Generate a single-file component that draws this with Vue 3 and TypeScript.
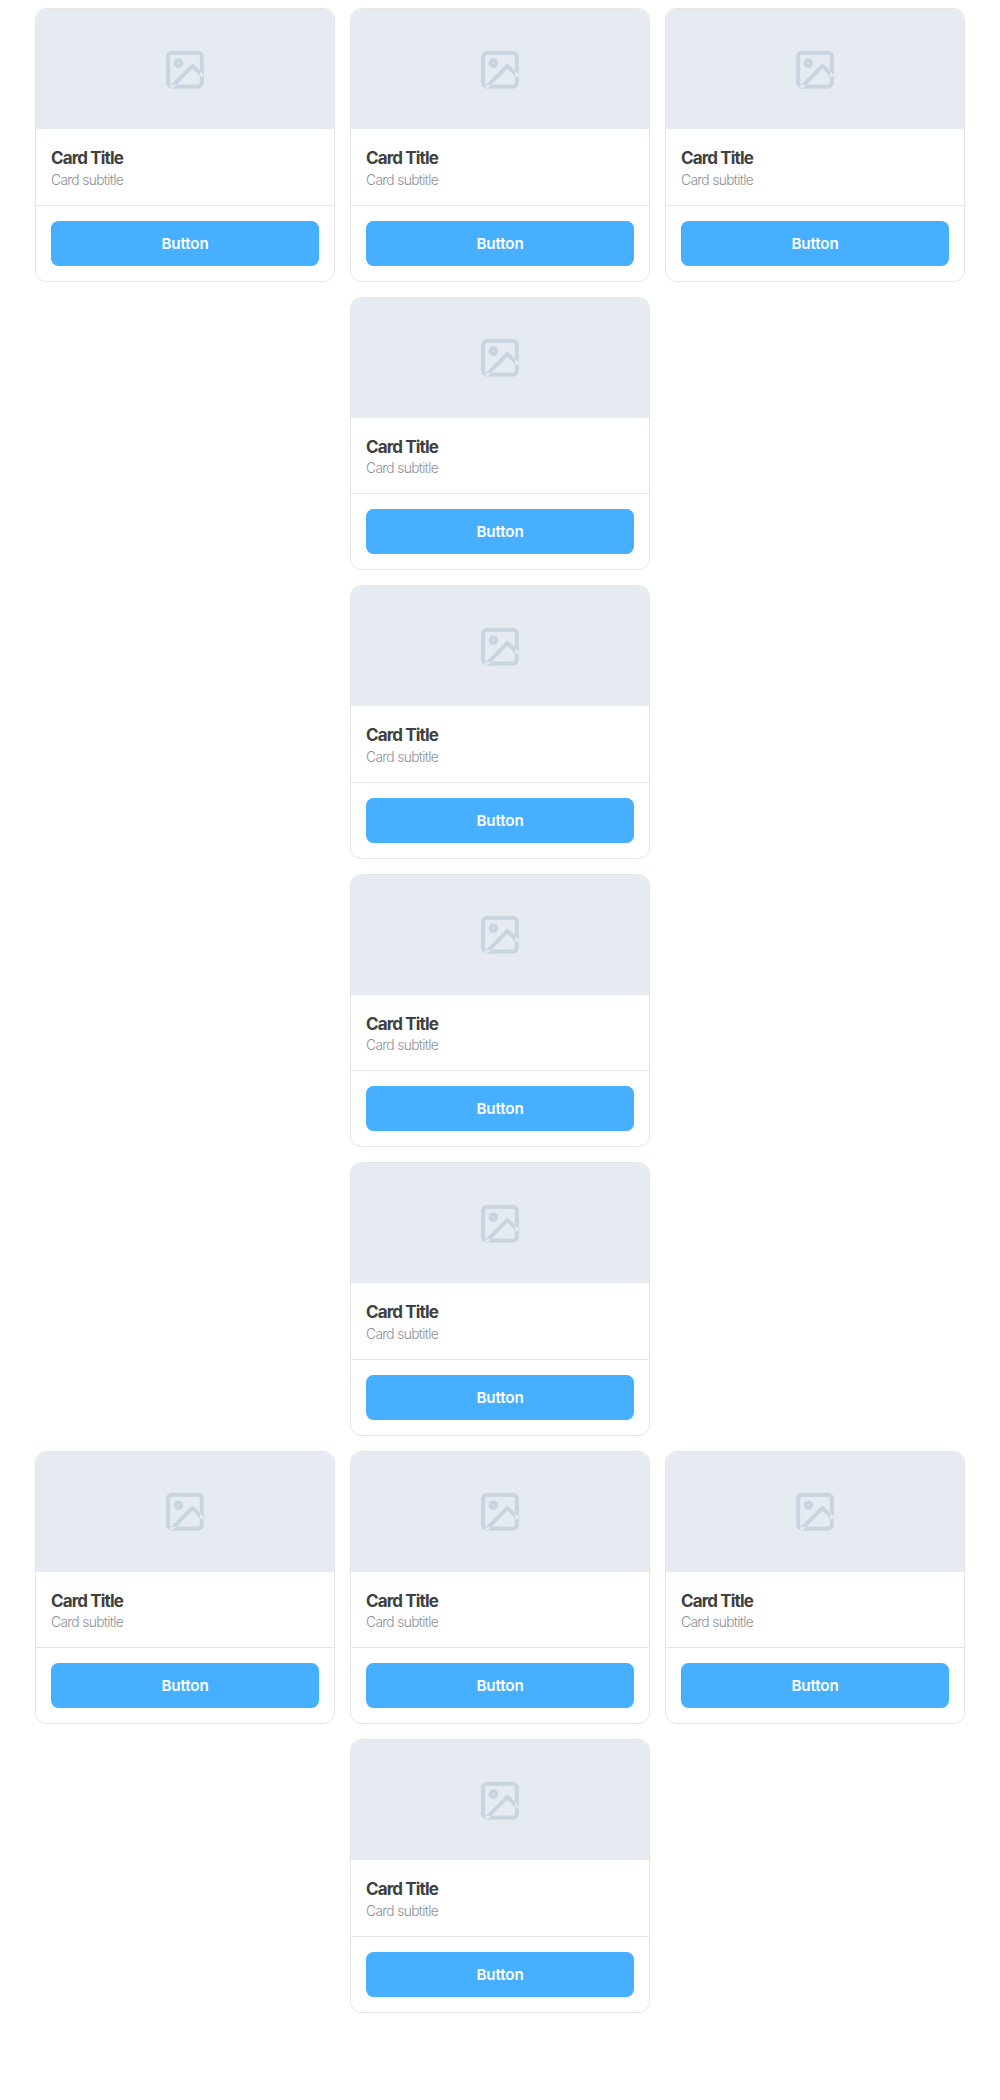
<script setup lang="ts">
interface Card {
  title: string
  subtitle: string
  action: string
}

const card = (): Card => ({ title: 'Card Title', subtitle: 'Card subtitle', action: 'Button' })
const rows: Card[][] = [3, 1, 1, 1, 1, 3, 1].map((count) => Array.from({ length: count }, card))
</script>

<template>
  <main class="page">
    <div v-for="(row, r) in rows" :key="r" class="row">
      <article v-for="(item, c) in row" :key="c" class="card">
        <div class="cover">
          <svg class="icon" viewBox="-0.25 -0.1 24 24" aria-hidden="true">
            <path
              fill-rule="evenodd"
              d="M5 2H19A3 3 0 0 1 22 5V19A3 3 0 0 1 19 22H5A3 3 0 0 1 2 19V5A3 3 0 0 1 5 2ZM5 4A1 1 0 0 0 4 5V19A1 1 0 0 0 5 20H19A1 1 0 0 0 20 19V5A1 1 0 0 0 19 4ZM8.5 6A2.5 2.5 0 1 1 8.5 11A2.5 2.5 0 1 1 8.5 6ZM8.5 8A.5 .5 0 1 0 8.5 9A.5 .5 0 1 0 8.5 8ZM21.707 14.293L16.707 9.293A1 1 0 0 0 15.293 9.293L4.293 20.293A1 1 0 0 0 5.707 21.707L16 11.414L20.293 15.707A1 1 0 0 0 21.707 14.293Z"
            />
          </svg>
        </div>
        <div class="body">
          <div class="title">{{ item.title }}</div>
          <div class="subtitle">{{ item.subtitle }}</div>
        </div>
        <div class="footer">
          <button class="button" type="button">{{ item.action }}</button>
        </div>
      </article>
    </div>
  </main>
</template>

<style>
body {
  background: #fff;
}
</style>

<style scoped>
.page {
  display: flex;
  flex-direction: column;
  gap: 15px;
  padding-top: 8px;
  font-family: Inter, sans-serif;
}
.row {
  display: flex;
  justify-content: center;
  gap: 15px;
}
.card {
  box-sizing: border-box;
  width: 300px;
  border: 1px solid #e5e5e5;
  border-radius: 11.25px;
  background: #fff;
}
.cover {
  display: flex;
  align-items: center;
  justify-content: center;
  height: 120px;
  border-radius: 11.25px 11.25px 0 0;
  background: #e6ebf2;
}
.icon {
  width: 45px;
  height: 45px;
  margin-right: 1px;
  fill: #c8d5e0;
  stroke: #c8d5e0;
  stroke-width: 0.15;
}
.body {
  box-sizing: border-box;
  height: 75.5px;
  padding: 18px 15px 0;
}
.title {
  font-size: 17px;
  font-weight: 700;
  line-height: 22px;
  letter-spacing: -0.87px;
  color: #404040;
}
.subtitle {
  margin-top: -0.2px;
  font-size: 13.8px;
  font-weight: 300;
  line-height: 22px;
  letter-spacing: -0.66px;
  color: #8e9196;
}
.footer {
  padding: 15px;
  border-top: 1px solid #e5e5e5;
}
.button {
  display: block;
  width: 100%;
  height: 45px;
  padding: 0;
  border: 0;
  border-radius: 7.5px;
  background: #46afff;
  color: #fff;
  font-family: inherit;
  font-size: 15.2px;
  font-weight: 600;
  letter-spacing: -0.12px;
}
</style>
